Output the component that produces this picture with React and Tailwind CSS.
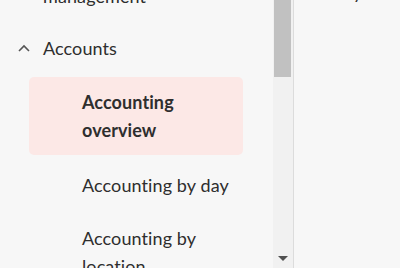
export default function App() {
  return (
    <div className="flex h-[268px] w-[400px] overflow-hidden bg-[#f7f7f7] text-[#2e2e2e]" style={{ fontFamily: "Lato, 'Noto Sans', sans-serif" }}>
      <div className="w-[273px] shrink-0 overflow-hidden">
        <div className="-mt-[18px] flex flex-col text-[18px] leading-[28px] tracking-[0.1px]">
          <div className="pl-[43px]">management</div>
          <div className="mt-[24px] flex items-center pl-[18px]">
            <svg width="12" height="8" viewBox="0 0 12 8" className="mr-[13px]">
              <path d="M1 7 L6 2 L11 7" fill="none" stroke="#555" strokeWidth="1.6" />
            </svg>
            <span>Accounts</span>
          </div>
          <div className="ml-[29px] mt-[15px] w-[214px] rounded-[5px] bg-[#fce8e6] py-[11px] pl-[53px] font-bold">
            <div>Accounting</div>
            <div>overview</div>
          </div>
          <div className="mt-[16px] pl-[82px]">Accounting by day</div>
          <div className="mt-[25px] pl-[82px]">
            <div>Accounting by</div>
            <div>location</div>
          </div>
        </div>
      </div>
      <div className="flex w-[20px] shrink-0 flex-col justify-between bg-[#f1f1f1]">
        <div className="ml-[1px] h-[77px] w-[17px] bg-[#c1c1c1]" />
        <div className="mb-[7px] flex justify-center">
          <svg width="10" height="5" viewBox="0 0 10 5">
            <path d="M0 0 L10 0 L5 5 Z" fill="#505050" />
          </svg>
        </div>
      </div>
      <div className="w-[1px] shrink-0 bg-[#dcdcdc]" />
      <div className="flex-1">
        <div className="-mt-[20px] pl-[59px] text-[18px] leading-[24px]">y</div>
      </div>
    </div>
  );
}
